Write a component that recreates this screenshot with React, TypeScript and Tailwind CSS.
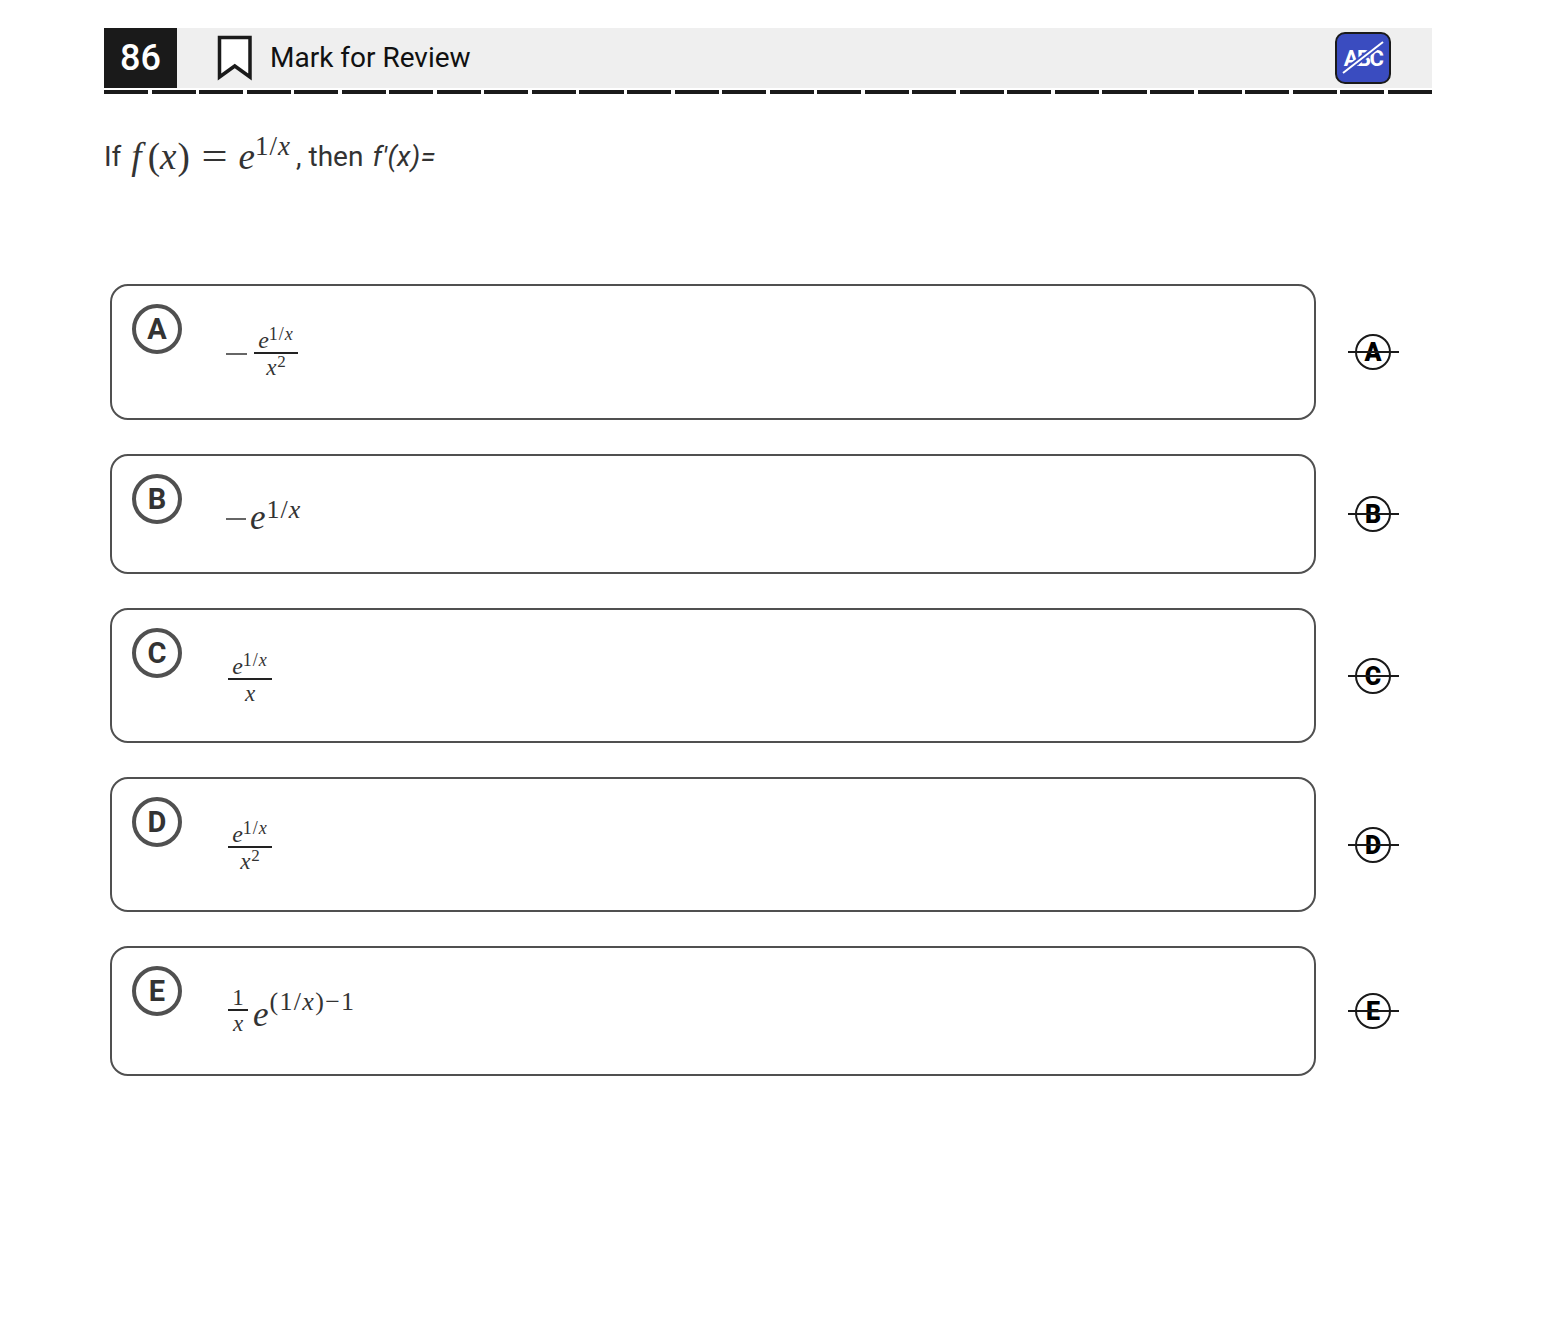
import type { ReactNode } from "react";

const letters = ["A", "B", "C", "D", "E"] as const;

const mathFont = "font-['Liberation_Serif',serif]";

function Sup({ children, className }: { children: ReactNode; className: string }) {
  return <span className={`relative not-italic ${className}`}>{children}</span>;
}

function ExpOneOverX({ className }: { className: string }) {
  return (
    <Sup className={className}>
      1/<i>x</i>
    </Sup>
  );
}

function Fraction({
  top,
  bottom,
  width,
}: {
  top: ReactNode;
  bottom: ReactNode;
  width: string;
}) {
  return (
    <span className={`inline-flex flex-col items-center ${width}`}>
      <span className="flex h-[24px] w-full items-end justify-center border-b-2 border-[#222] leading-none">
        {top}
      </span>
      <span className="flex h-[24px] w-full items-start justify-center pt-[2px] leading-none">
        {bottom}
      </span>
    </span>
  );
}

const eOverSmall = (
  <span className="text-[24px]">
    <i>e</i>
    <ExpOneOverX className="-top-[8px] text-[18px] tracking-[1px]" />
  </span>
);

const xSquared = (
  <span className="text-[23px]">
    <i>x</i>
    <Sup className="-top-[8px] ml-[1px] text-[17px]">2</Sup>
  </span>
);

function OptionMath({ letter }: { letter: (typeof letters)[number] }) {
  if (letter === "A")
    return (
      <div className="mt-[26px] flex items-center">
        <span className="mr-[7px] h-[2px] w-[21px] bg-[#666]" />
        <Fraction top={eOverSmall} bottom={xSquared} width="w-[44px]" />
      </div>
    );
  if (letter === "B")
    return (
      <div className="mt-[22px] flex items-baseline text-[35px] leading-[44px]">
        <span className="mr-[4px] h-[2px] w-[20px] translate-y-[-9px] bg-[#666]" />
        <i>e</i>
        <ExpOneOverX className="-top-[11px] ml-[1px] text-[26px] tracking-[1px]" />
      </div>
    );
  if (letter === "C")
    return (
      <div className="mt-[28px] ml-[2px] flex">
        <Fraction
          top={eOverSmall}
          bottom={<i className="text-[23px]">x</i>}
          width="w-[44px]"
        />
      </div>
    );
  if (letter === "D")
    return (
      <div className="mt-[27px] ml-[2px] flex">
        <Fraction top={eOverSmall} bottom={xSquared} width="w-[44px]" />
      </div>
    );
  return (
    <div className="mt-[23px] ml-[2px] flex items-center">
      <span className="inline-flex w-[20px] flex-col items-center text-[23px] leading-none">
        <span className="flex h-[22px] w-full items-end justify-center border-b-2 border-[#222]">
          1
        </span>
        <i className="pt-[1px]">x</i>
      </span>
      <span className="ml-[5px] translate-y-[2px] text-[35px] leading-none">
        <i>e</i>
        <Sup className="-top-[16px] ml-[1px] text-[26px] tracking-[1.3px]">
          (1/<i>x</i>)−1
        </Sup>
      </span>
    </div>
  );
}

const heights: Record<string, string> = {
  A: "h-[136px]",
  B: "h-[120px]",
  C: "h-[135px]",
  D: "h-[135px]",
  E: "h-[130px]",
};

function Bookmark() {
  return (
    <svg width="36" height="46" viewBox="0 0 36 46" fill="none" className="shrink-0">
      <path
        d="M2.5 2.5H33V42L17.75 31L2.5 42V2.5Z"
        fill="#fff"
        stroke="#1a1a1a"
        strokeWidth="3.5"
      />
    </svg>
  );
}

export default function App() {
  return (
    <div className="min-h-[1324px] bg-white pt-[28px] pl-[104px] font-['Roboto',sans-serif] text-[#333]">
      <div className="w-[1328px]">
        <div className="flex h-[60px] items-center bg-[#efefef]">
          <div className="flex h-full w-[73px] items-center justify-center bg-[#1a1a1a] text-[36px] font-medium text-white">
            86
          </div>
          <div className="ml-[40px]">
            <Bookmark />
          </div>
          <span className="ml-[17px] text-[28px] text-[#111]">Mark for Review</span>
          <button className="relative mr-[41px] ml-auto flex h-[52px] w-[56px] items-center justify-center rounded-[10px] border-2 border-[#1a1a1a] bg-[#3a4cc0] text-[22px] font-bold tracking-[-1.5px] text-white">
            ABC
            <svg
              width="56"
              height="52"
              viewBox="0 0 56 52"
              className="absolute top-[-2px] left-[-2px]"
            >
              <path d="M8 41L48 10" stroke="#3a4cc0" strokeWidth="6" />
              <path d="M8 41L48 10" stroke="#fff" strokeWidth="2" />
            </svg>
          </button>
        </div>
        <div className="mt-[2px] flex gap-[3.5px]">
          {Array.from({ length: 28 }, (_, i) => (
            <div key={i} className="h-[4px] flex-1 bg-[#1a1a1a]" />
          ))}
        </div>

        <div className="mt-[38px] flex h-[50px] items-center text-[28px]">
          <span>If</span>
          <span className={`ml-[10px] text-[37px] ${mathFont}`}>
            <i>f</i>
            <span className="ml-[6px]">(</span>
            <i>x</i>
            <span className="ml-[1px]">)</span>
            <span className="mx-[12px] inline-block scale-x-125 px-[2px]">=</span>
            <i>e</i>
            <ExpOneOverX className="-top-[14px] text-[27px] tracking-[1px]" />
          </span>
          <span className="ml-[5px]">, then</span>
          <i className="ml-[9px] tracking-[0.3px]">f'(x)=</i>
        </div>

        <div className={`mt-[102px] ml-[6px] flex flex-col gap-[34px] ${mathFont}`}>
          {letters.map((letter) => (
            <div key={letter} className="flex items-center">
              <div
                className={`flex w-[1206px] items-start rounded-[18px] border-2 border-[#505050] pt-[18px] pl-[20px] ${heights[letter]}`}
              >
                <div className="flex h-[50px] w-[50px] shrink-0 items-center justify-center rounded-full border-4 border-[#505050] pt-[1px] font-['Roboto',sans-serif] text-[29px] font-bold text-[#333]">
                  {letter}
                </div>
                <div className="ml-[44px]">
                  <OptionMath letter={letter} />
                </div>
              </div>
              <div className="relative ml-[32px] flex h-[36px] w-[51px] items-center justify-center">
                <div className="mr-[1px] flex h-[36px] w-[36px] items-center justify-center rounded-full border-2 border-[#1a1a1a] pt-[2px] font-['Roboto',sans-serif] text-[25px] font-black text-black">
                  {letter}
                </div>
                <div className="absolute top-[17px] left-0 h-[2px] w-full bg-[#1a1a1a]" />
              </div>
            </div>
          ))}
        </div>
      </div>
    </div>
  );
}
